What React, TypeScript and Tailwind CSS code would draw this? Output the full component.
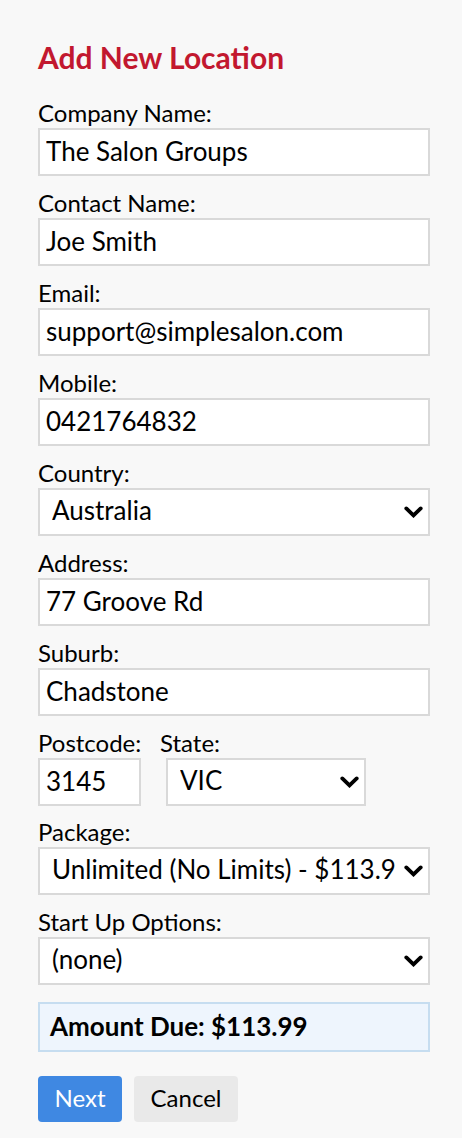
import React from "react";

const Chevron = () => (
  <svg
    width="19"
    height="12"
    viewBox="0 0 19 12"
    className="pointer-events-none absolute right-[7px] top-1/2 -translate-y-1/2"
    aria-hidden="true"
  >
    <path d="M2.3 2.4 L9.5 9.4 L16.7 2.4" fill="none" stroke="#000" strokeWidth="3.8" strokeLinecap="round" strokeLinejoin="miter" />
  </svg>
);

const Label = ({ children, className = "" }: { children: React.ReactNode; className?: string }) => (
  <div className={"h-[26px] whitespace-nowrap text-[24px] leading-[26px] text-black " + className}>{children}</div>
);

const TextInput = ({ value, className = "w-full" }: { value: string; className?: string }) => (
  <input
    type="text"
    defaultValue={value}
    className={
      "mt-[2px] block h-[48px] border-2 border-[#d9d9d9] bg-white pb-[3px] pl-[6px] text-[26px] text-black outline-none " +
      className
    }
    style={{ fontFamily: "Lato, 'Open Sans', sans-serif" }}
  />
);

const Select = ({ value, className = "w-full" }: { value: string; className?: string }) => (
  <div className={"relative mt-[2px] " + className}>
    <select
      defaultValue={value}
      className="block h-[48px] w-full appearance-none border-2 border-[#d9d9d9] bg-white pb-[3px] pl-[12px] pr-[22px] text-[26px] text-black outline-none"
      style={{ fontFamily: "Lato, 'Open Sans', sans-serif" }}
    >
      <option value={value}>{value}</option>
    </select>
    <Chevron />
  </div>
);

export default function App() {
  return (
    <div
      className="min-h-[1138px] w-full bg-[#f8f8f8] px-[38px] pt-[39px]"
      style={{ fontFamily: "Lato, 'Open Sans', sans-serif" }}
    >
      <div className="w-[392px]">
        <h1 className="h-[36px] text-[30px] font-bold leading-[36px] text-[#c2182f]">Add New Location</h1>

        <div className="mt-[25px]">
          <Label>Company Name:</Label>
          <TextInput value="The Salon Groups" />
        </div>
        <div className="mt-[14px]">
          <Label>Contact Name:</Label>
          <TextInput value="Joe Smith" />
        </div>
        <div className="mt-[14px]">
          <Label>Email:</Label>
          <TextInput value="support@simplesalon.com" />
        </div>
        <div className="mt-[14px]">
          <Label>Mobile:</Label>
          <TextInput value="0421764832" />
        </div>
        <div className="mt-[14px]">
          <Label>Country:</Label>
          <Select value="Australia" />
        </div>
        <div className="mt-[14px]">
          <Label>Address:</Label>
          <TextInput value="77 Groove Rd" />
        </div>
        <div className="mt-[14px]">
          <Label>Suburb:</Label>
          <TextInput value="Chadstone" />
        </div>
        <div className="mt-[14px] flex">
          <div className="w-[103px]">
            <Label>Postcode:</Label>
            <TextInput value="3145" className="w-[103px]" />
          </div>
          <div className="ml-[19px]">
            <Label>State:</Label>
            <Select value="VIC" className="ml-[6px] w-[200px]" />
          </div>
        </div>
        <div className="mt-[13px]">
          <Label>Package:</Label>
          <Select value="Unlimited (No Limits) - $113.9" />
        </div>
        <div className="mt-[14px]">
          <Label>Start Up Options:</Label>
          <Select value="(none)" />
        </div>

        <div className="mt-[17px] flex h-[50px] items-center border-2 border-[#c6ddf0] bg-[#eef5fd] pb-[2px] pl-[10px] text-[26px] font-bold text-black">
          Amount Due: $113.99
        </div>

        <div className="mt-[24px] flex gap-[12px]">
          <button className="h-[46px] w-[84px] rounded-[4px] bg-[#3f88e2] pb-[2px] text-[24px] text-white">Next</button>
          <button className="h-[46px] w-[104px] rounded-[4px] bg-[#e9e9e9] pb-[2px] text-[24px] text-black">Cancel</button>
        </div>
      </div>
    </div>
  );
}
